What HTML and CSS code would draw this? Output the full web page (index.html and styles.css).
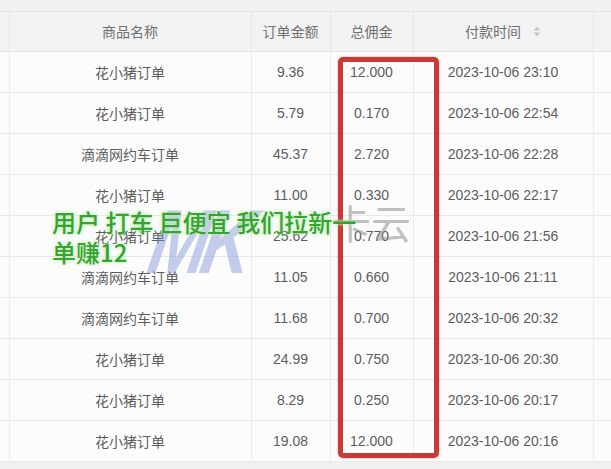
FILE: index.html
```html
<!DOCTYPE html>
<html lang="zh">
<head>
<meta charset="utf-8">
<link rel="stylesheet" href="styles.css">
</head>
<body>
<div class="page">
  <div class="topbar"></div>
  <table class="orders">
    <colgroup>
      <col class="c-edge"><col class="c-name"><col class="c-amt"><col class="c-comm"><col class="c-time"><col class="c-rest">
    </colgroup>
    <thead>
      <tr>
        <th></th>
        <th>商品名称</th>
        <th>订单金额</th>
        <th>总佣金</th>
        <th><span class="sortable">付款时间<svg class="sort" width="8" height="11" viewBox="0 0 8 11"><path d="M4 0.5 L7.5 4.5 H0.5 Z" fill="#c4c7cc"/><path d="M4 10.5 L7.5 6.5 H0.5 Z" fill="#c4c7cc"/></svg></span></th>
        <th></th>
      </tr>
    </thead>
    <tbody>
      <tr><td></td><td>花小猪订单</td><td>9.36</td><td>12.000</td><td>2023-10-06 23:10</td><td></td></tr>
      <tr><td></td><td>花小猪订单</td><td>5.79</td><td>0.170</td><td>2023-10-06 22:54</td><td></td></tr>
      <tr><td></td><td>滴滴网约车订单</td><td>45.37</td><td>2.720</td><td>2023-10-06 22:28</td><td></td></tr>
      <tr><td></td><td>花小猪订单</td><td>11.00</td><td>0.330</td><td>2023-10-06 22:17</td><td></td></tr>
      <tr><td></td><td>花小猪订单</td><td>25.62</td><td>0.770</td><td>2023-10-06 21:56</td><td></td></tr>
      <tr><td></td><td>滴滴网约车订单</td><td>11.05</td><td>0.660</td><td>2023-10-06 21:11</td><td></td></tr>
      <tr><td></td><td>滴滴网约车订单</td><td>11.68</td><td>0.700</td><td>2023-10-06 20:32</td><td></td></tr>
      <tr><td></td><td>花小猪订单</td><td>24.99</td><td>0.750</td><td>2023-10-06 20:30</td><td></td></tr>
      <tr><td></td><td>花小猪订单</td><td>8.29</td><td>0.250</td><td>2023-10-06 20:17</td><td></td></tr>
      <tr><td></td><td>花小猪订单</td><td>19.08</td><td>12.000</td><td>2023-10-06 20:16</td><td></td></tr>
    </tbody>
  </table>
  <div class="footer"></div>

  <div class="highlight"></div>
  <div class="wm-logo">MK</div>
  <div class="wm-text">卡云</div>
  <div class="caption">用户 打车 巨便宜 我们拉新一<br>单赚12</div>
</div>
</body>
</html>
```

FILE: styles.css
```css
* { box-sizing: border-box; }
html, body {
  margin: 0;
  padding: 0;
  background: #f3f3f3;
}
.page {
  position: relative;
  width: 611px;
  height: 469px;
  overflow: hidden;
  font-family: "Liberation Sans", "Noto Sans CJK SC", sans-serif;
  font-size: 14px;
  color: #5c5c5c;
}
.topbar {
  height: 12px;
  background: #f1f1f1;
  border-bottom: 1px solid #e6e6e6;
}
.orders {
  width: 611px;
  table-layout: fixed;
  border-collapse: collapse;
  background: #fcfcfc;
}
.c-edge { width: 9px; }
.c-name { width: 242px; }
.c-amt { width: 79px; }
.c-comm { width: 83px; }
.c-time { width: 180px; }
.c-rest { width: 18px; }

.orders th {
  height: 39px;
  padding: 0;
  font-weight: normal;
  color: #707070;
  background: #f3f3f3;
  border-right: 1px solid #e6e6e6;
  border-bottom: 1px solid #e3e3e3;
  text-align: center;
  white-space: nowrap;
}
.orders td {
  height: 41px;
  padding: 0;
  text-align: center;
  white-space: nowrap;
  border-right: 1px solid #ececec;
  border-bottom: 1px solid #e9e9e9;
}
.orders th:last-child, .orders td:last-child { border-right: none; }
.sortable {
  display: inline-flex;
  align-items: center;
  gap: 12px;
}
.sort { display: block; }
.footer {
  height: 10px;
  background: #f0f0f0;
}

.highlight {
  position: absolute;
  left: 338px;
  top: 57px;
  width: 101px;
  height: 401px;
  border: 5px solid #c73a36;
  border-radius: 5px;
  box-shadow: 0 0 2px rgba(199, 58, 54, 0.6);
}

.wm-logo {
  position: absolute;
  left: 160px;
  top: 196px;
  font-family: "Liberation Sans", sans-serif;
  font-size: 70px;
  font-weight: bold;
  font-style: italic;
  letter-spacing: -6px;
  line-height: 70px;
  color: rgba(120, 138, 214, 0.42);
  transform: scaleY(1.3) skewX(-14deg);
  transform-origin: left top;
}
.wm-text {
  position: absolute;
  left: 331px;
  top: 200px;
  font-family: "Noto Sans CJK SC", sans-serif;
  font-size: 40px;
  line-height: 44px;
  color: rgba(140, 140, 140, 0.55);
}

.caption {
  position: absolute;
  left: 52px;
  top: 207px;
  font-family: "Noto Sans CJK SC", sans-serif;
  font-size: 24px;
  font-weight: 500;
  line-height: 30px;
  color: #37a232;
  text-shadow: 0 0 2px #d6f7cf, 0 0 4px #a6e89c;
  white-space: nowrap;
}
```
